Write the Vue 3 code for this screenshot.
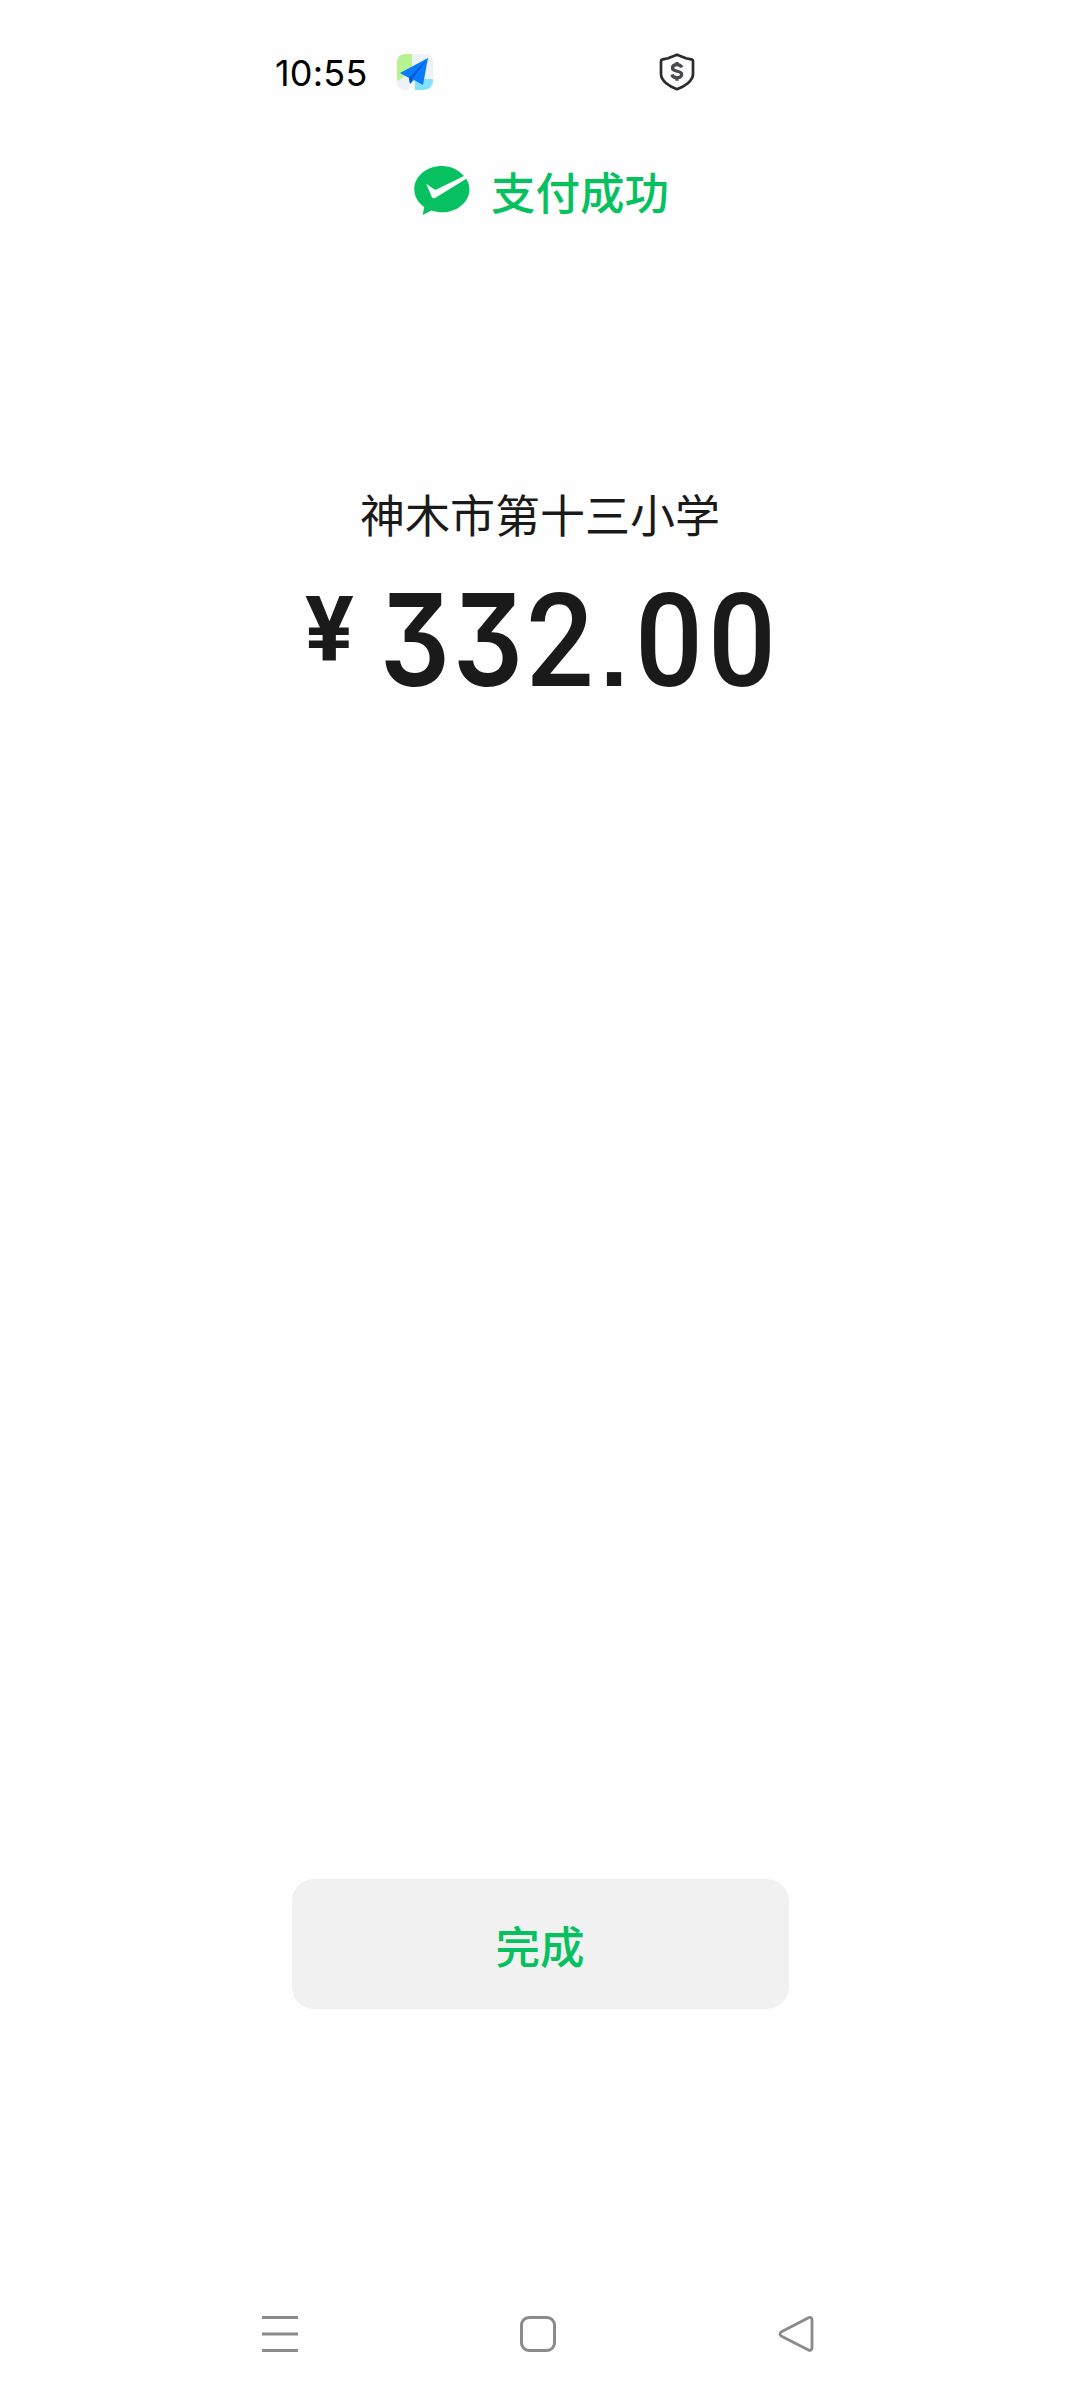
<script setup>
const amount = [
  { char: '3', kind: 'three' },
  { char: '3', kind: 'three' },
  { char: '2', kind: 'two' },
  { char: '.', kind: 'dot' },
  { char: '0', kind: 'zero' },
  { char: '0', kind: 'zero' },
]
</script>

<template>
  <main class="screen">
    <header class="status">
      <span class="time">10:55</span>
      <svg class="plane" width="38" height="38" viewBox="0 0 38 38">
        <rect x="1" y="1" width="36" height="36" rx="8" fill="#eef1f6" />
        <path d="M9 1h7v18L1 28V9a8 8 0 0 1 8-8Z" fill="#b7f391" />
        <path d="M19 26h18v2a9 9 0 0 1-9 9h-9Z" fill="#83e0ff" />
        <path d="M13 28l4-2 1 11h-5Z" fill="#fff" />
        <path d="M32 5L4 20l9 5 1 6 4-4 9 5Z" fill="#0a7cff" />
        <path d="M32 5L13 25l1 6 3-6Z" fill="#075bd0" />
      </svg>
      <svg class="shield" width="36" height="38" viewBox="0 0 36 38">
        <path d="M18 1.700L27 5.200 33.200 6.600Q34 7 34 8v13c0 7-8.500 12.500-16 15.200C10.500 33.500 2 28 2 21V8Q2 7 2.800 6.600L9 5.200Z" fill="none" stroke="#2b2b2d" stroke-width="2.700" stroke-linejoin="round" />
        <path d="M22.700 14.500c-.7-2-2.300-2.800-4.700-2.800-2.800 0-4.500 1.200-4.500 3.300 0 4.500 9.200 2 9.200 6.300 0 2.200-2 3.400-4.700 3.400-2.700 0-4.500-1.100-5-3.200M18 9v3M18 24.500v3.300" fill="none" stroke="#4b4b4d" stroke-width="3.300" />
      </svg>
    </header>

    <div class="result">
      <svg width="56" height="50" viewBox="0 0 56 50">
        <path d="M28 0C12.600 0 .3 10.300.3 23.200c0 7.200 3.800 13.600 9.900 17.800L8.700 49l8.900-4.500c3.300 1.200 6.800 1.800 10.400 1.800 15.300 0 27.400-10.300 27.400-23.100 0-3.900-1.100-7.400-3.100-10.500L21.500 31.800c-1.600 1-3 .5-3.800-1.100L12.200 17.800l7.900 5.400c.9.600 1.800.6 2.800.1L50 10.100C44.900 4 37 0 28 0Z" fill="#07c160" />
      </svg>
      <span>支付成功</span>
    </div>

    <div class="payee">神木市第十三小学</div>
    <div class="price">
      <span class="currency">¥</span>
      <span class="amount"><span v-for="(d, i) in amount" :key="i" class="digit" :class="d.kind"><span class="glyph">{{ d.char }}</span></span></span>
    </div>

    <button class="done">完成</button>

    <nav class="nav">
      <svg width="40" height="40" viewBox="0 0 40 40"><path d="M2 3.500h36M2 20h36M2 36.500h36" stroke="#8c8c8c" stroke-width="3" /></svg>
      <svg width="40" height="40" viewBox="0 0 40 40"><rect x="3.500" y="3.500" width="33" height="33" rx="7.500" fill="none" stroke="#8a8a8a" stroke-width="3" /></svg>
      <svg width="40" height="40" viewBox="0 0 40 40"><path d="M33 3.500L5.500 17.800Q2.500 20 5.500 22.200L33 36.300Q36 36.800 36 33.500V6Q36 2.700 33 3.500Z" fill="none" stroke="#8a8a8a" stroke-width="2.800" stroke-linejoin="round" /></svg>
    </nav>
  </main>
</template>

<style>
body { background: #fefefe; }
</style>

<style scoped>
.screen {
  width: 1080px;
  height: 2400px;
  display: flex;
  flex-direction: column;
  align-items: center;
  background: #fefefe;
  font-family: "Noto Sans CJK SC", sans-serif;
}
.status {
  box-sizing: border-box;
  width: 100%;
  height: 144px;
  padding: 0 0 0 275px;
  display: flex;
  align-items: center;
}
.time {
  width: 121px;
  padding-top: 1px;
  font: 400 36px/40px Inter, sans-serif;
  letter-spacing: 0.2px;
  color: #000;
}
.shield { margin-left: 225px; }
.result {
  height: 94px;
  display: flex;
  align-items: center;
  gap: 21px;
  padding-left: 3px;
  color: #07c160;
  font-size: 44.500px;
  font-weight: 500;
  line-height: 60px;
}
.payee {
  margin-top: 246px;
  color: #1a1a1a;
  font-size: 45px;
  line-height: 60px;
}
.price {
  height: 140px;
  width: 474px;
  margin-top: 26px;
  margin-left: 4px;
  display: flex;
  color: #1a1a1a;
}
.currency {
  flex: none;
  width: 72px;
  font: 700 91px/120px Roboto, sans-serif;
}
.amount {
  flex: none;
  display: flex;
  align-items: baseline;
  font: 500 130px/140px Roboto, sans-serif;
}
.digit {
  width: 73px;
  display: flex;
  flex: none;
  justify-content: center;
}
.dot { width: 37px; }
.three {
  font: 600 128px/140px Inter, sans-serif;
  font-feature-settings: "cv09";
}
.three .glyph { transform: translateX(1px) scaleX(0.86); }
.two .glyph { transform: scaleX(0.92); }
.zero .glyph { transform: translateX(-1px) scaleX(0.92); }
.dot .glyph {
  font-family: "Liberation Sans", sans-serif;
  transform: scaleX(1.15);
}
.done {
  width: 497px;
  height: 130px;
  margin-top: 1169px;
  padding: 2px 0 0;
  border: 0;
  border-radius: 22px;
  background: #f1f1f1;
  color: #07c160;
  font: 500 44.500px/60px "Noto Sans CJK SC", sans-serif;
}
.nav {
  width: 556px;
  height: 40px;
  margin-top: 305px;
  margin-right: 4px;
  display: flex;
  justify-content: space-between;
}
</style>
